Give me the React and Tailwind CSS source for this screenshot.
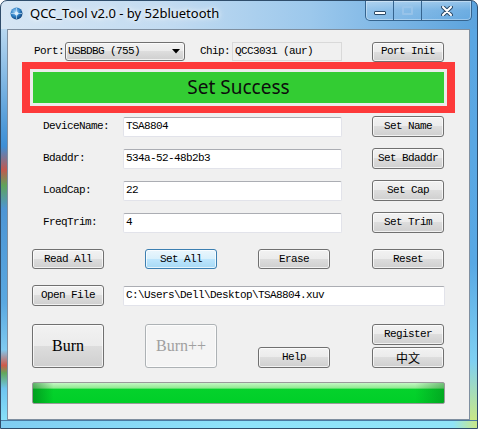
import React from 'react';

const mono = "font-['Liberation_Mono',monospace] text-[11px] tracking-[-0.6px] text-black";

const Btn = ({ children, w = 'w-[72px]', h = 'h-[21px]', kind = 'normal', className = '' }) => {
  const skin =
    kind === 'default'
      ? 'border-[#3c7fb1] bg-[linear-gradient(180deg,#eaf6fd_0%,#d9f0fc_49%,#bee6fd_50%,#a7d9f5_100%)] text-black'
      : kind === 'disabled'
      ? 'border-[#adb2b5] bg-[#f4f4f4] text-[#a0a0a0]'
      : 'border-[#707070] bg-[linear-gradient(180deg,#f2f2f2_0%,#ebebeb_49%,#dddddd_50%,#cfcfcf_100%)] text-black';
  return (
    <div
      className={`${w} ${h} ${skin} ${className} flex shrink-0 items-center justify-center rounded-[3px] border shadow-[inset_0_0_0_1px_rgba(255,255,255,0.7)]`}
    >
      {children}
    </div>
  );
};

const Field = ({ value, w }) => (
  <div
    className={`${w} flex h-[20px] shrink-0 items-center rounded-[2px] border border-[#e2e3ea] border-t-[#abadb3] bg-white pl-[2px] ${mono}`}
  >
    {value}
  </div>
);

const ParamRow = ({ label, value, button, mt }) => (
  <div className={`${mt} flex h-[21px] items-center`}>
    <div className={`ml-[35px] w-[80px] shrink-0 ${mono}`}>{label}</div>
    <Field value={value} w="w-[219px]" />
    <Btn className={`ml-[30px] ${mono}`}>{button}</Btn>
  </div>
);

const TitleIcon = () => (
  <svg width="13" height="13" viewBox="0 0 13 13">
    <defs>
      <radialGradient id="gl" cx="40%" cy="35%" r="70%">
        <stop offset="0%" stopColor="#9fd0f5" />
        <stop offset="55%" stopColor="#2d7fc4" />
        <stop offset="100%" stopColor="#123f72" />
      </radialGradient>
    </defs>
    <circle cx="6.5" cy="6.5" r="6" fill="url(#gl)" />
    <path d="M6.5 1 V12 M1 6.5 H12" stroke="#cfe8fb" strokeWidth="0.8" opacity="0.8" />
    <circle cx="6.5" cy="6.5" r="2" fill="#e9f5ff" opacity="0.8" />
  </svg>
);

const WinControls = () => (
  <div className="mr-[5px] flex h-[20px] overflow-hidden rounded-b-[5px] border border-t-0 border-[#35648f] shadow-[inset_0_0_0_1px_rgba(255,255,255,0.35)]">
    <div className="flex w-[28px] items-center justify-center border-r border-[#35648f] bg-[linear-gradient(180deg,rgba(255,255,255,0.35),rgba(255,255,255,0.1)_50%,rgba(255,255,255,0.05))]">
      <div className="mt-[4px] h-[4px] w-[12px] rounded-[1px] border border-[#2c4a68] bg-white" />
    </div>
    <div className="flex w-[28px] items-center justify-center border-r border-[#35648f] bg-[linear-gradient(180deg,rgba(255,255,255,0.35),rgba(255,255,255,0.1)_50%,rgba(255,255,255,0.05))]">
      <div className="h-[9px] w-[11px] rounded-[1px] border-2 border-[#9cc6ea] opacity-80" />
    </div>
    <div className="flex w-[49px] items-center justify-center bg-[linear-gradient(180deg,rgba(255,255,255,0.35),rgba(255,255,255,0.1)_50%,rgba(255,255,255,0.05))]">
      <svg width="12" height="10" viewBox="0 0 12 10">
        <path d="M2 1 L10 9 M10 1 L2 9" stroke="#2c4a68" strokeWidth="4" strokeLinecap="round" />
        <path d="M2 1 L10 9 M10 1 L2 9" stroke="#ffffff" strokeWidth="2" strokeLinecap="round" />
      </svg>
    </div>
  </div>
);

export default function App() {
  return (
    <div className="flex h-[429px] w-[478px] flex-col overflow-hidden rounded-t-[7px] border border-[#2f4d6b] bg-[linear-gradient(90deg,#d6e6f4_0%,#c2dbf1_35%,#9cc8ec_65%,#5ba3de_100%)]">
      <div className="flex h-[28px] items-start justify-between">
        <div className="ml-[9px] mt-[6px] flex items-center gap-[7px]">
          <TitleIcon />
          <span className="font-['Noto_Sans',sans-serif] text-[13px] leading-none text-black [text-shadow:0_0_8px_#ffffff,0_0_4px_#ffffff]">
            QCC_Tool v2.0 - by 52bluetooth
          </span>
        </div>
        <WinControls />
      </div>

      <div className="flex">
        <div className="w-[6px] bg-[linear-gradient(180deg,#b9d8f0_0%,#4f9ad8_25%,#3d8fd6_30%,#c2584e_36%,#5fa35a_40%,#4d95d4_46%,#5aa8e0_70%,#7fcaf0_82%,#d05a4a_86%,#62a85c_88%,#6fc5f0_92%,#88e0f8_100%)]" />
        <div className="h-[391px] w-[463px] border border-[#7f8fa0] bg-[#f0f0f0]">
          <div className="mt-[12px] flex h-[19px] items-center">
            <div className={`ml-[26px] w-[31px] shrink-0 ${mono}`}>Port:</div>
            <div className="flex h-[19px] w-[120px] shrink-0 items-center justify-between rounded-[3px] border border-[#707070] bg-[linear-gradient(180deg,#f2f2f2_0%,#ebebeb_49%,#dddddd_50%,#cfcfcf_100%)] pl-[2px] pr-[4px] shadow-[inset_0_0_0_1px_rgba(255,255,255,0.7)]">
              <span className={mono}>USBDBG (755)</span>
              <svg width="8" height="5" viewBox="0 0 8 5">
                <path d="M0 0 H8 L4 4.5 Z" fill="#000" />
              </svg>
            </div>
            <div className={`ml-[15px] w-[32px] shrink-0 ${mono}`}>Chip:</div>
            <div className={`flex h-[19px] w-[110px] shrink-0 items-center border border-[#d9d9d9] bg-[#f0f0f0] pl-[2px] ${mono}`}>
              QCC3031 (aur)
            </div>
            <Btn h="h-[20px]" className={`ml-[30px] ${mono}`}>Port Init</Btn>
          </div>

          <div className="ml-[14px] mt-[1px] h-[51px] w-[433px] border-x-[8px] border-y-[7px] border-[#fd3a3a] bg-[#ebebeb] p-[3px]">
            <div className="flex h-full items-center justify-center bg-[#33cc33] font-['Noto_Sans',sans-serif] text-[19px] leading-none text-[#0c0c0c]">
              Set Success
            </div>
          </div>

          <ParamRow label="DeviceName:" value="TSA8804" button="Set Name" mt="mt-[3px]" />
          <ParamRow label="Bdaddr:" value="534a-52-48b2b3" button="Set Bdaddr" mt="mt-[11px]" />
          <ParamRow label="LoadCap:" value="22" button="Set Cap" mt="mt-[11px]" />
          <ParamRow label="FreqTrim:" value="4" button="Set Trim" mt="mt-[11px]" />

          <div className="ml-[24px] mt-[16px] flex h-[20px] items-center">
            <Btn h="h-[20px]" className={mono}>Read All</Btn>
            <Btn h="h-[20px]" kind="default" className={`ml-[41px] ${mono}`}>Set All</Btn>
            <Btn h="h-[20px]" className={`ml-[41px] ${mono}`}>Erase</Btn>
            <Btn h="h-[20px]" className={`ml-[42px] ${mono}`}>Reset</Btn>
          </div>

          <div className="ml-[24px] mt-[16px] flex h-[21px] items-center">
            <Btn className={mono}>Open File</Btn>
            <div className="ml-[19px]">
              <Field value={'C:\\Users\\Dell\\Desktop\\TSA8804.xuv'} w="w-[322px]" />
            </div>
          </div>

          <div className="ml-[24px] mt-[18px] flex h-[44px] items-end">
            <Btn h="h-[44px]" className="font-['Liberation_Serif',serif] text-[16px]">Burn</Btn>
            <Btn h="h-[44px]" kind="disabled" className="ml-[41px] font-['Liberation_Serif',serif] text-[16px]">Burn++</Btn>
            <Btn className={`ml-[41px] ${mono}`}>Help</Btn>
            <div className="ml-[42px] flex flex-col gap-[2px]">
              <Btn className={mono}>Register</Btn>
              <Btn className="font-['Noto_Sans_CJK_SC',sans-serif] text-[12px] leading-none text-black">中文</Btn>
            </div>
          </div>

          <div className="ml-[24px] mt-[14px] h-[22px] w-[413px] rounded-[2px] border border-[#9a9a9a] bg-[linear-gradient(90deg,rgba(0,110,20,0.5)_0%,rgba(0,110,20,0)_5%,rgba(0,110,20,0)_93%,rgba(0,110,20,0.4)_100%),linear-gradient(180deg,#c6f7c6_0%,#8ee98e_26%,#05d22c_30%,#00cf28_100%)]" />
        </div>
        <div className="w-[7px] bg-[linear-gradient(180deg,#5aa6e2_0%,#58a8e4_60%,#7fd0f2_85%,#c8e886_100%)]" />
      </div>
      <div className="flex-1 border-t border-[#4a7aa3] bg-[linear-gradient(90deg,#7fcdf2_0%,#8ee3fa_50%,#90e4f8_95%,#c8e886_100%)]" />
    </div>
  );
}
